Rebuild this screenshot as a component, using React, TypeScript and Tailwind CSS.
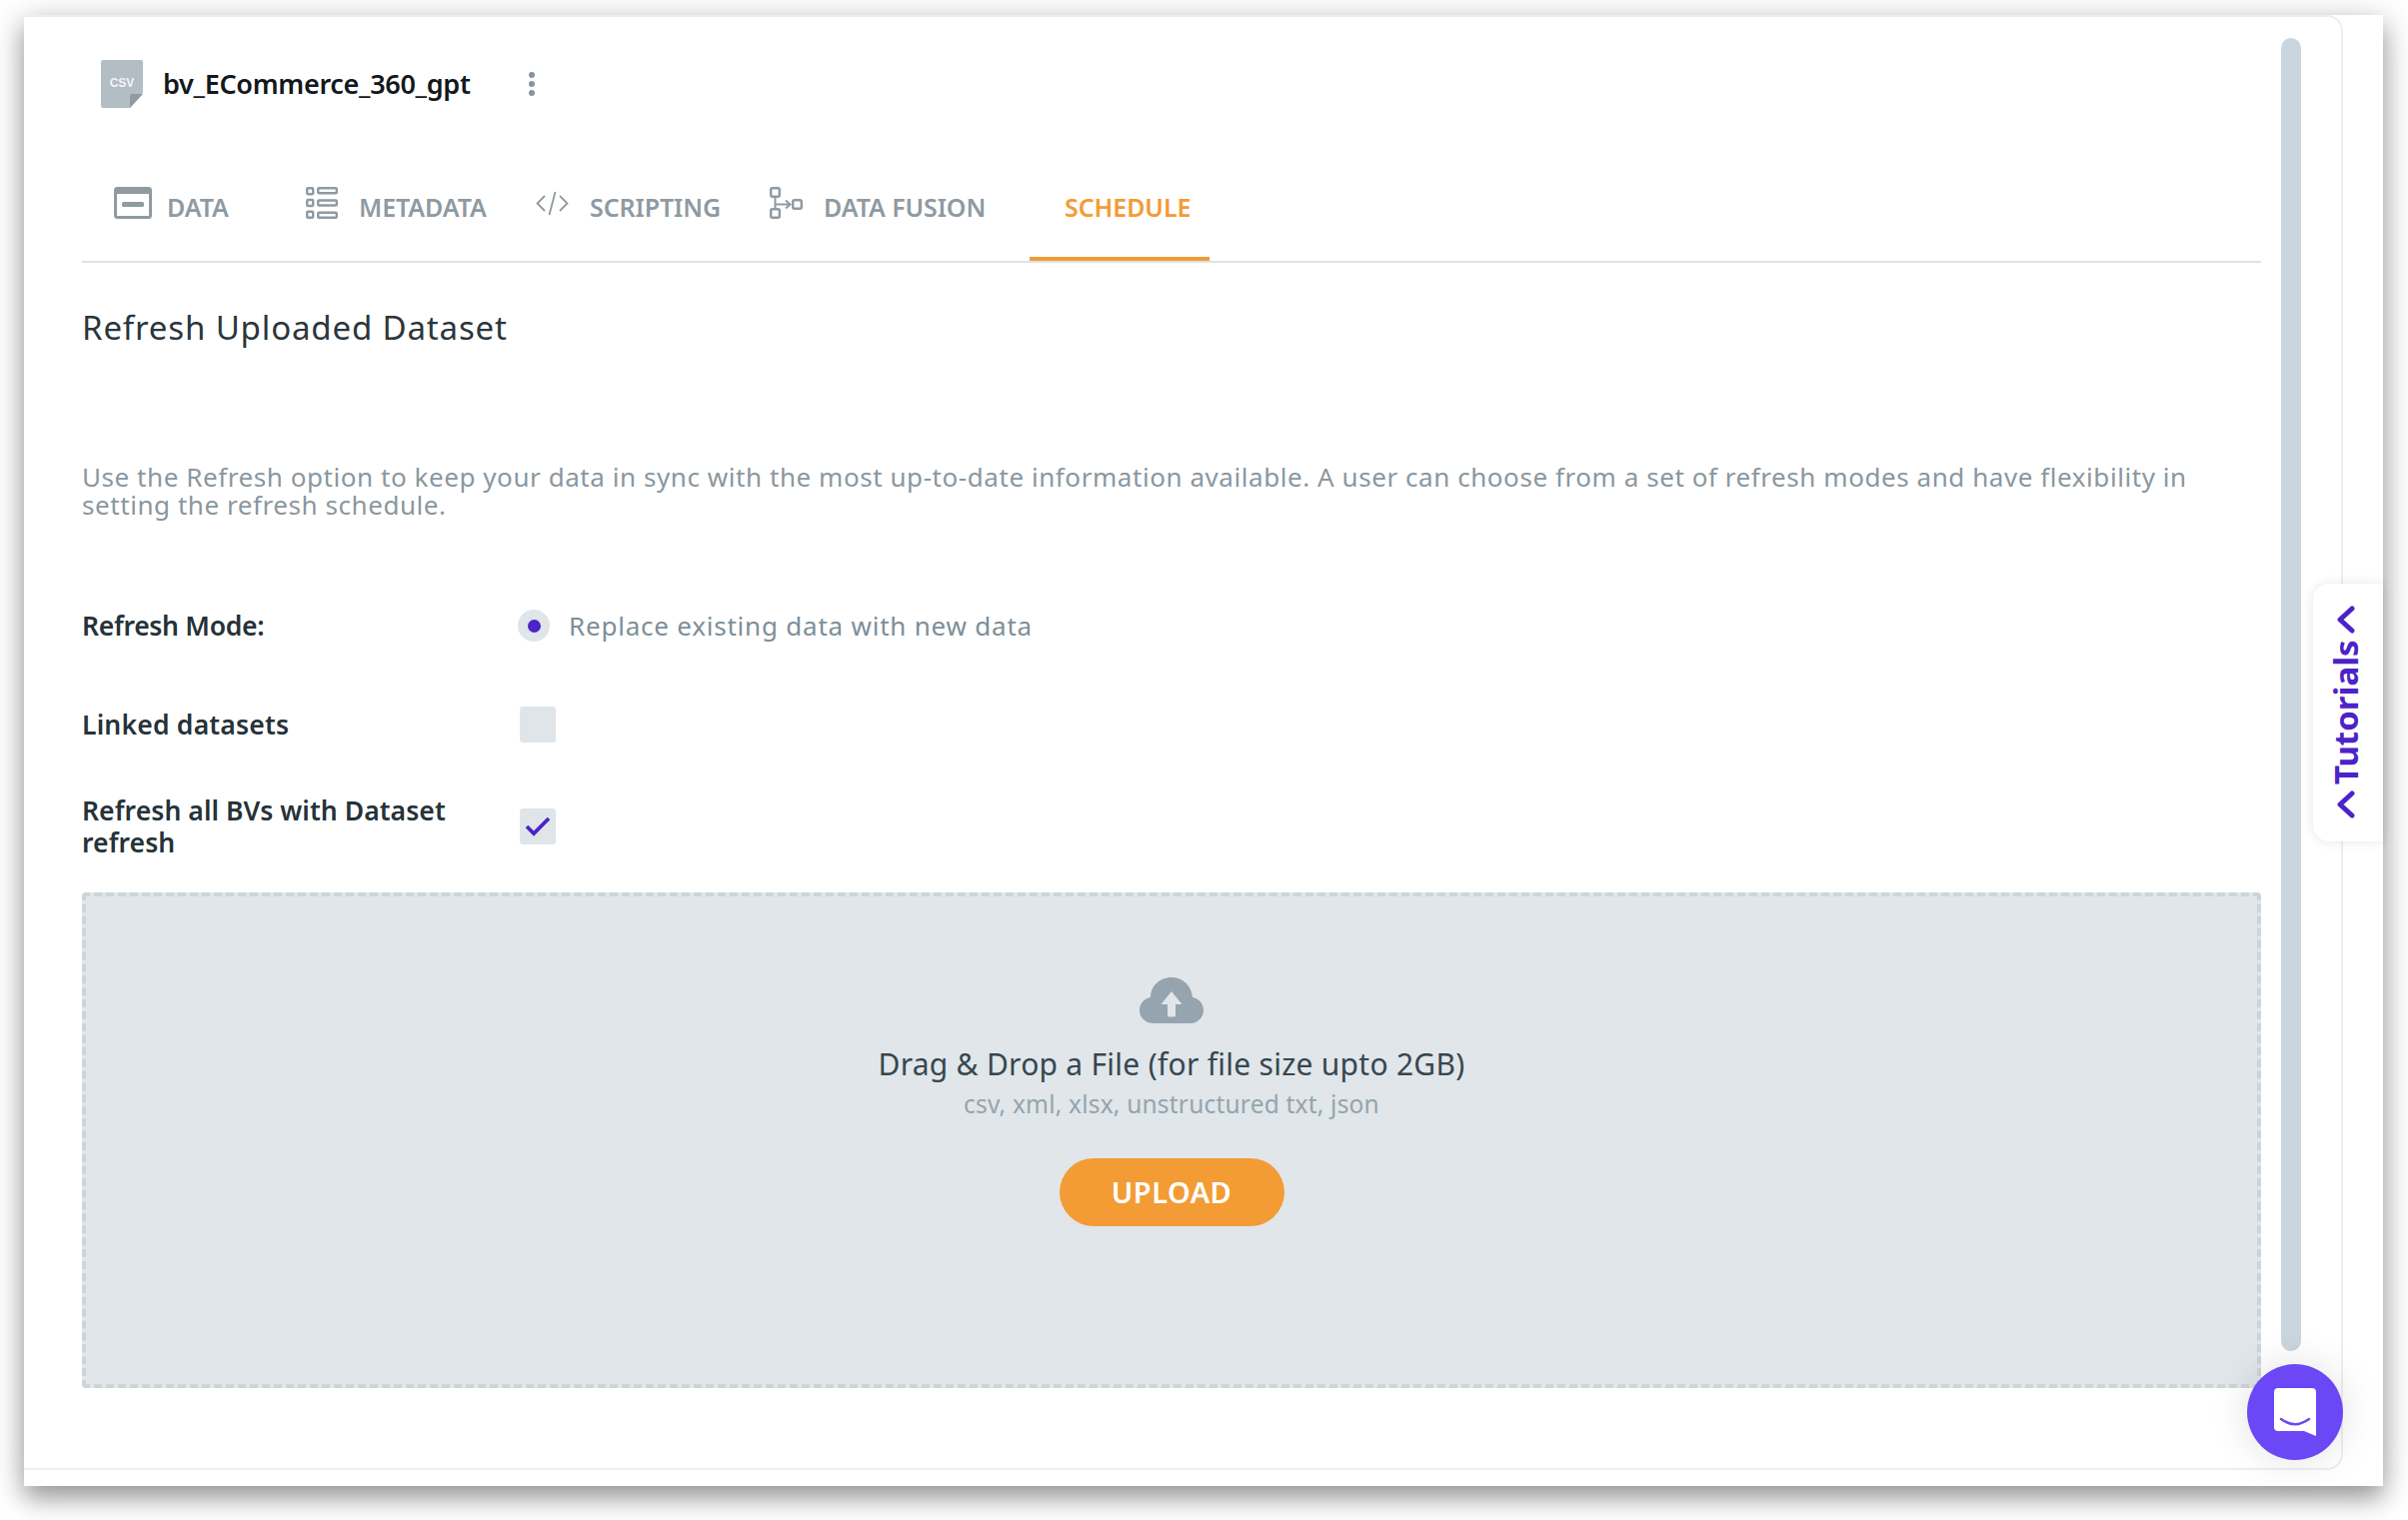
import React from "react";

const font = "font-['Noto_Sans',sans-serif]";

function CsvIcon() {
  return (
    <svg width="42" height="48" viewBox="0 0 42 48" className="shrink-0">
      <path d="M2 0H40a2 2 0 0 1 2 2V33L29 48H2a2 2 0 0 1-2-2V2a2 2 0 0 1 2-2Z" fill="#b3bec4" />
      <path d="M42 34H31a2 2 0 0 0-2 2V48Z" fill="#8f9ca4" />
      <text x="21" y="26.5" fontSize="12" fontWeight="700" fill="#f3f5f6" textAnchor="middle" fontFamily="Liberation Sans, sans-serif">CSV</text>
    </svg>
  );
}

function DataIcon() {
  return (
    <svg width="38" height="32" viewBox="0 0 38 32" className="shrink-0">
      <rect x="1.5" y="1.5" width="35" height="29" rx="2" fill="none" stroke="#8f9aa1" strokeWidth="3" />
      <rect x="1" y="1" width="36" height="6" rx="2" fill="#8f9aa1" />
      <rect x="8" y="15" width="22" height="5" rx="1.5" fill="#8f9aa1" />
    </svg>
  );
}

function MetaIcon() {
  return (
    <svg width="32" height="32" viewBox="0 0 32 32" className="shrink-0" fill="none" stroke="#8f9aa1" strokeWidth="2.4">
      <rect x="1.2" y="1.2" width="6" height="6" rx="1" />
      <rect x="12.2" y="1.2" width="18.6" height="5" rx="1" />
      <rect x="1.2" y="13" width="6" height="6" rx="1" />
      <rect x="12.2" y="13.5" width="18.6" height="5" rx="1" />
      <rect x="1.2" y="24.8" width="6" height="6" rx="1" />
      <rect x="12.2" y="25.8" width="18.6" height="5" rx="1" />
    </svg>
  );
}

function CodeIcon() {
  return (
    <svg width="33" height="24" viewBox="0 0 33 24" className="shrink-0" fill="none" stroke="#8f9aa1" strokeWidth="1.8">
      <path d="M9 5 1.5 12.5 9 20" />
      <path d="M24 5l7.5 7.5L24 20" />
      <path d="M19.5 1 13.5 24" />
    </svg>
  );
}

function FusionIcon() {
  return (
    <svg width="33" height="32" viewBox="0 0 33 32" className="shrink-0" fill="none" stroke="#8f9aa1" strokeWidth="2.4">
      <rect x="1.2" y="1.2" width="8.6" height="8.6" rx="1.5" />
      <rect x="1.2" y="22.2" width="8.6" height="8.6" rx="1.5" />
      <rect x="23.2" y="13.2" width="8.6" height="8.6" rx="1.5" />
      <path d="M5.5 10v12M5.5 17.5H20M16 13.5l4.5 4-4.5 4" strokeWidth="2" />
    </svg>
  );
}

function Tab({ icon, label, gap, ml, w }: { icon: React.ReactNode; label: string; gap: string; ml: string; w: string }) {
  return (
    <div className={`flex items-center h-[32px] ${ml} ${gap}`}>
      {icon}
      <span className={`${w} mt-[8px] whitespace-nowrap text-[25px] leading-[32px] font-semibold tracking-[-0.1px] text-[#8f9aa1]`}>{label}</span>
    </div>
  );
}

function CloudIcon() {
  return (
    <svg width="64" height="46" viewBox="0 0 64 46">
      <path d="M14 46C6 46 0 40 0 33 0 26 5 21 11 20 11 9 20 0 32 0c11 0 20 8 21 20 6 1 11 6 11 13 0 7-6 13-13 13Z" fill="#95a4af" />
      <path d="M32 14 42.5 27H36V38a1.5 1.5 0 0 1-1.5 1.5h-5A1.5 1.5 0 0 1 28 38V27H21.5Z" fill="#e0e6ea" />
    </svg>
  );
}

function Chevron() {
  return (
    <svg width="18" height="28" viewBox="0 0 18 28" fill="none" stroke="#4b23c8" strokeWidth="5" strokeLinecap="round" strokeLinejoin="round">
      <path d="M15 3 3 14l12 11" />
    </svg>
  );
}

export default function App() {
  return (
    <div className={`w-[2409px] h-[1521px] bg-white overflow-hidden pt-[15px] pl-[24px] ${font}`}>
      <div className="relative w-[2360px] h-[1472px] bg-white shadow-[0_12px_24px_rgba(0,0,0,0.38),0_0_40px_rgba(0,0,0,0.1)]">
        <div className="flex w-[2320px] h-[1456px] border-t-2 border-r-2 border-b-2 border-[#eeeeee] rounded-r-[16px]">
          <div className="w-[2180px] ml-[58px] shrink-0 flex flex-col">
            <div className="flex items-center h-[48px] mt-[43px] ml-[19px]">
              <CsvIcon />
              <span className="ml-[20px] w-[330px] text-[27px] leading-[48px] font-semibold tracking-[-0.3px] text-[#14181b] whitespace-nowrap">bv_ECommerce_360_gpt</span>
              <div className="ml-[36px] flex flex-col gap-[3px]">
                <span className="w-[6px] h-[6px] rounded-full bg-[#8794a0]" />
                <span className="w-[6px] h-[6px] rounded-full bg-[#8794a0]" />
                <span className="w-[6px] h-[6px] rounded-full bg-[#8794a0]" />
              </div>
            </div>

            <div className="flex h-[95px] mt-[60px] border-b-2 border-[#dde4e7] pt-[19px]">
              <Tab icon={<DataIcon />} label="DATA" ml="ml-[32px]" gap="gap-[15px]" w="w-[62px]" />
              <Tab icon={<MetaIcon />} label="METADATA" ml="ml-[77px]" gap="gap-[21px]" w="w-[128px]" />
              <Tab icon={<CodeIcon />} label="SCRIPTING" ml="ml-[49px]" gap="gap-[21px]" w="w-[132px]" />
              <Tab icon={<FusionIcon />} label="DATA FUSION" ml="ml-[48px]" gap="gap-[21px]" w="w-[160px]" />
              <div className="ml-[46px] w-[180px] h-[74px] pl-[35px] border-b-4 border-[#f39c35]">
                <span className="block mt-[4px] whitespace-nowrap text-[25px] leading-[32px] font-semibold tracking-[-0.1px] text-[#f39c35]">SCHEDULE</span>
              </div>
            </div>

            <h1 className="mt-[45px] text-[33px] leading-[40px] font-normal tracking-[0.85px] text-[#2b363d]">Refresh Uploaded Dataset</h1>

            <p className="mt-[115px] w-[2150px] text-[26px] leading-[28px] tracking-[0.56px] text-[#8a979f]">
              Use the Refresh option to keep your data in sync with the most up-to-date information available. A user can choose from a set of refresh modes and have flexibility in setting the refresh schedule.
            </p>

            <div className="mt-[91px] flex items-center h-[32px]">
              <span className="w-[436px] text-[26.5px] leading-[32px] font-semibold tracking-[-0.3px] text-[#263238]">Refresh Mode:</span>
              <span className="w-[32px] h-[32px] rounded-full bg-[#e0e5e9] flex items-center justify-center">
                <span className="w-[13px] h-[13px] rounded-full bg-[#4b23c8]" />
              </span>
              <span className="ml-[19px] text-[26px] tracking-[0.78px] text-[#7d8e99]">Replace existing data with new data</span>
            </div>

            <div className="mt-[65px] flex items-center h-[36px]">
              <span className="w-[438px] text-[26.5px] leading-[32px] font-semibold tracking-[0.2px] text-[#263238]">Linked datasets</span>
              <span className="w-[36px] h-[36px] rounded-[3px] bg-[#e0e5e9]" />
            </div>

            <div className="mt-[52px] flex items-center h-[64px]">
              <span className="w-[438px] pr-[40px] text-[26.5px] leading-[32px] font-semibold tracking-[0.08px] text-[#263238]">Refresh all BVs with Dataset refresh</span>
              <span className="w-[36px] h-[36px] rounded-[3px] bg-[#e0e5e9] flex items-center justify-center">
                <svg width="26" height="22" viewBox="0 0 26 22" fill="none" stroke="#4b23c8" strokeWidth="3.8">
                  <path d="M2 11l7 7L24 3" />
                </svg>
              </span>
            </div>

            <div className="mt-[34px] h-[496px] border-4 border-dashed border-[#cdd5d9] rounded-[4px] bg-[#e0e6ea] flex flex-col items-center pt-[81px]">
              <CloudIcon />
              <div className="mt-[19px] text-[30px] leading-[44px] tracking-[0.27px] text-[#37474f] whitespace-nowrap">Drag &amp; Drop a File (for file size upto 2GB)</div>
              <div className="mt-[2px] text-[24.5px] leading-[32px] tracking-[0.2px] text-[#95a4af] whitespace-nowrap">csv, xml, xlsx, unstructured txt, json</div>
              <button className="mt-[38px] w-[225px] h-[68px] rounded-full bg-[#f39c35] text-white text-[29px] font-semibold tracking-[0.5px]">UPLOAD</button>
            </div>
          </div>

          <div className="ml-[20px] mt-[21px] w-[20px] h-[1314px] rounded-full bg-[#cad5dd] shrink-0" />
        </div>

        <div className="absolute right-0 top-[569px] w-[70px] h-[258px] bg-white rounded-l-[16px] shadow-[0_0_12px_rgba(0,0,0,0.1)] flex flex-col items-center pt-[22px] pr-[5px]">
          <Chevron />
          <span className="[writing-mode:vertical-rl] rotate-180 mt-[8px] h-[143px] text-[33px] leading-[34px] font-bold text-[#4b23c8] tracking-[0px] whitespace-nowrap">Tutorials</span>
          <span className="mt-[6px]"><Chevron /></span>
        </div>

        <div className="absolute left-[2224px] top-[1350px] w-[96px] h-[96px] rounded-full bg-[#6c47f5] shadow-[0_0_40px_rgba(0,0,0,0.12)] flex items-center justify-center">
          <svg width="42" height="48" viewBox="0 0 42 48">
            <path d="M4 0H38a4 4 0 0 1 4 4V48L30 43H4a4 4 0 0 1-4-4V4a4 4 0 0 1 4-4Z" fill="#ffffff" />
            <path d="M7 31C17 38 25 38 35 31" fill="none" stroke="#6c47f5" strokeWidth="2.6" strokeLinecap="round" />
          </svg>
        </div>
      </div>
    </div>
  );
}
